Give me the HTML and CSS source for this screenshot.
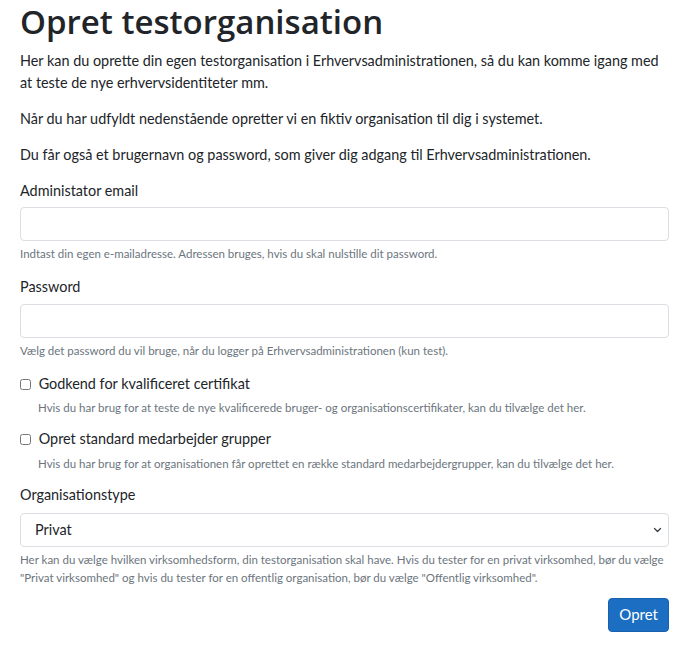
FILE: index.html
```html
<!DOCTYPE html>
<html>
<head>
    <title>Opret testorganisation</title>
    <link rel="stylesheet" href="styles.css">
</head>
<body>
    <div class="container">
        <h1>Opret testorganisation</h1>
        <p>Her kan du oprette din egen testorganisation i Erhvervsadministrationen, så du kan komme igang med at teste de nye erhvervsidentiteter mm.</p>
        <p>Når du har udfyldt nedenstående opretter vi en fiktiv organisation til dig i systemet.</p>
        <p>Du får også et brugernavn og password, som giver dig adgang til Erhvervsadministrationen.</p>

        <form>
            <div class="form-group">
                <label for="adminEmail" class="form-label">Administator email</label>
                <input type="email" id="adminEmail" class="form-control">
                <div class="form-text">Indtast din egen e-mailadresse. Adressen bruges, hvis du skal nulstille dit password.</div>
            </div>
            <div class="form-group">
                <label for="password" class="form-label">Password</label>
                <input type="password" id="password" class="form-control">
                <div class="form-text">Vælg det password du vil bruge, når du logger på Erhvervsadministrationen (kun test).</div>
            </div>
            <div class="form-check">
                <label class="check-label"><input type="checkbox" id="qualified"> Godkend for kvalificeret certifikat</label>
                <div class="form-text">Hvis du har brug for at teste de nye kvalificerede bruger- og organisationscertifikater, kan du tilvælge det her.</div>
            </div>
            <div class="form-check">
                <label class="check-label"><input type="checkbox" id="groups"> Opret standard medarbejder grupper</label>
                <div class="form-text">Hvis du har brug for at organisationen får oprettet en række standard medarbejdergrupper, kan du tilvælge det her.</div>
            </div>
            <div class="form-group last">
                <label for="orgType" class="form-label">Organisationstype</label>
                <select id="orgType" class="form-select">
                    <option>Privat</option>
                    <option>Offentlig</option>
                </select>
                <div class="form-text">Her kan du vælge hvilken virksomhedsform, din testorganisation skal have. Hvis du tester for en privat virksomhed, bør du vælge "Privat virksomhed" og hvis du tester for en offentlig organisation, bør du vælge "Offentlig virksomhed".</div>
            </div>
            <div class="actions">
                <button type="button" class="btn-primary">Opret</button>
            </div>
        </form>
    </div>
</body>
</html>
```

FILE: styles.css
```css
body {
    margin: 0;
    font-family: Lato, "Open Sans", sans-serif;
    font-size: 14.4px;
    line-height: 21.6px;
    color: #212529;
    background: #fff;
}
.container {
    padding: 0 26px 0 20px;
}
h1 {
    margin: 0 0 7px 0;
    font-family: "Open Sans", sans-serif;
    font-size: 33px;
    line-height: 43px;
    font-weight: 600;
}
p {
    margin: 0 0 14.4px 0;
}
.form-group {
    margin-bottom: 13px;
}
.form-label {
    display: block;
    margin-bottom: 6px;
}
.last .form-label {
    margin-bottom: 7px;
}
.form-control,
.form-select {
    display: block;
    box-sizing: border-box;
    width: 100%;
    height: 34px;
    padding: 5px 11px;
    font: inherit;
    color: #212529;
    background-color: #fff;
    border: 1px solid #dadee2;
    border-radius: 4px;
}
.form-select {
    appearance: none;
    -webkit-appearance: none;
    padding-left: 14px;
    padding-right: 30px;
    background-image: url("data:image/svg+xml,%3csvg xmlns='http://www.w3.org/2000/svg' viewBox='0 0 16 16'%3e%3cpath fill='none' stroke='%23343a40' stroke-linecap='round' stroke-linejoin='round' stroke-width='2.4' d='M2 5l6 6 6-6'/%3e%3c/svg%3e");
    background-repeat: no-repeat;
    background-position: right 6px center;
    background-size: 9px 8px;
}
.form-text {
    margin-top: 4px;
    font-size: 11.5px;
    line-height: 18px;
    color: #6c757d;
}
.form-check {
    margin-bottom: 11px;
}
.check-label {
    display: block;
}
.check-label input {
    width: 11px;
    height: 11px;
    margin: 0 4px 0 0;
    vertical-align: -1px;
}
.form-check .form-text {
    margin-top: 5px;
    margin-left: 18px;
}
.last {
    margin-bottom: 0;
}
.actions {
    display: flex;
    justify-content: flex-end;
    margin-top: 11px;
}
.btn-primary {
    height: 34px;
    padding: 0 10px;
    font: inherit;
    font-size: 15px;
    color: #fff;
    background-color: #1b6ec2;
    border: 1px solid #1861ac;
    border-radius: 4px;
    cursor: pointer;
}
```
